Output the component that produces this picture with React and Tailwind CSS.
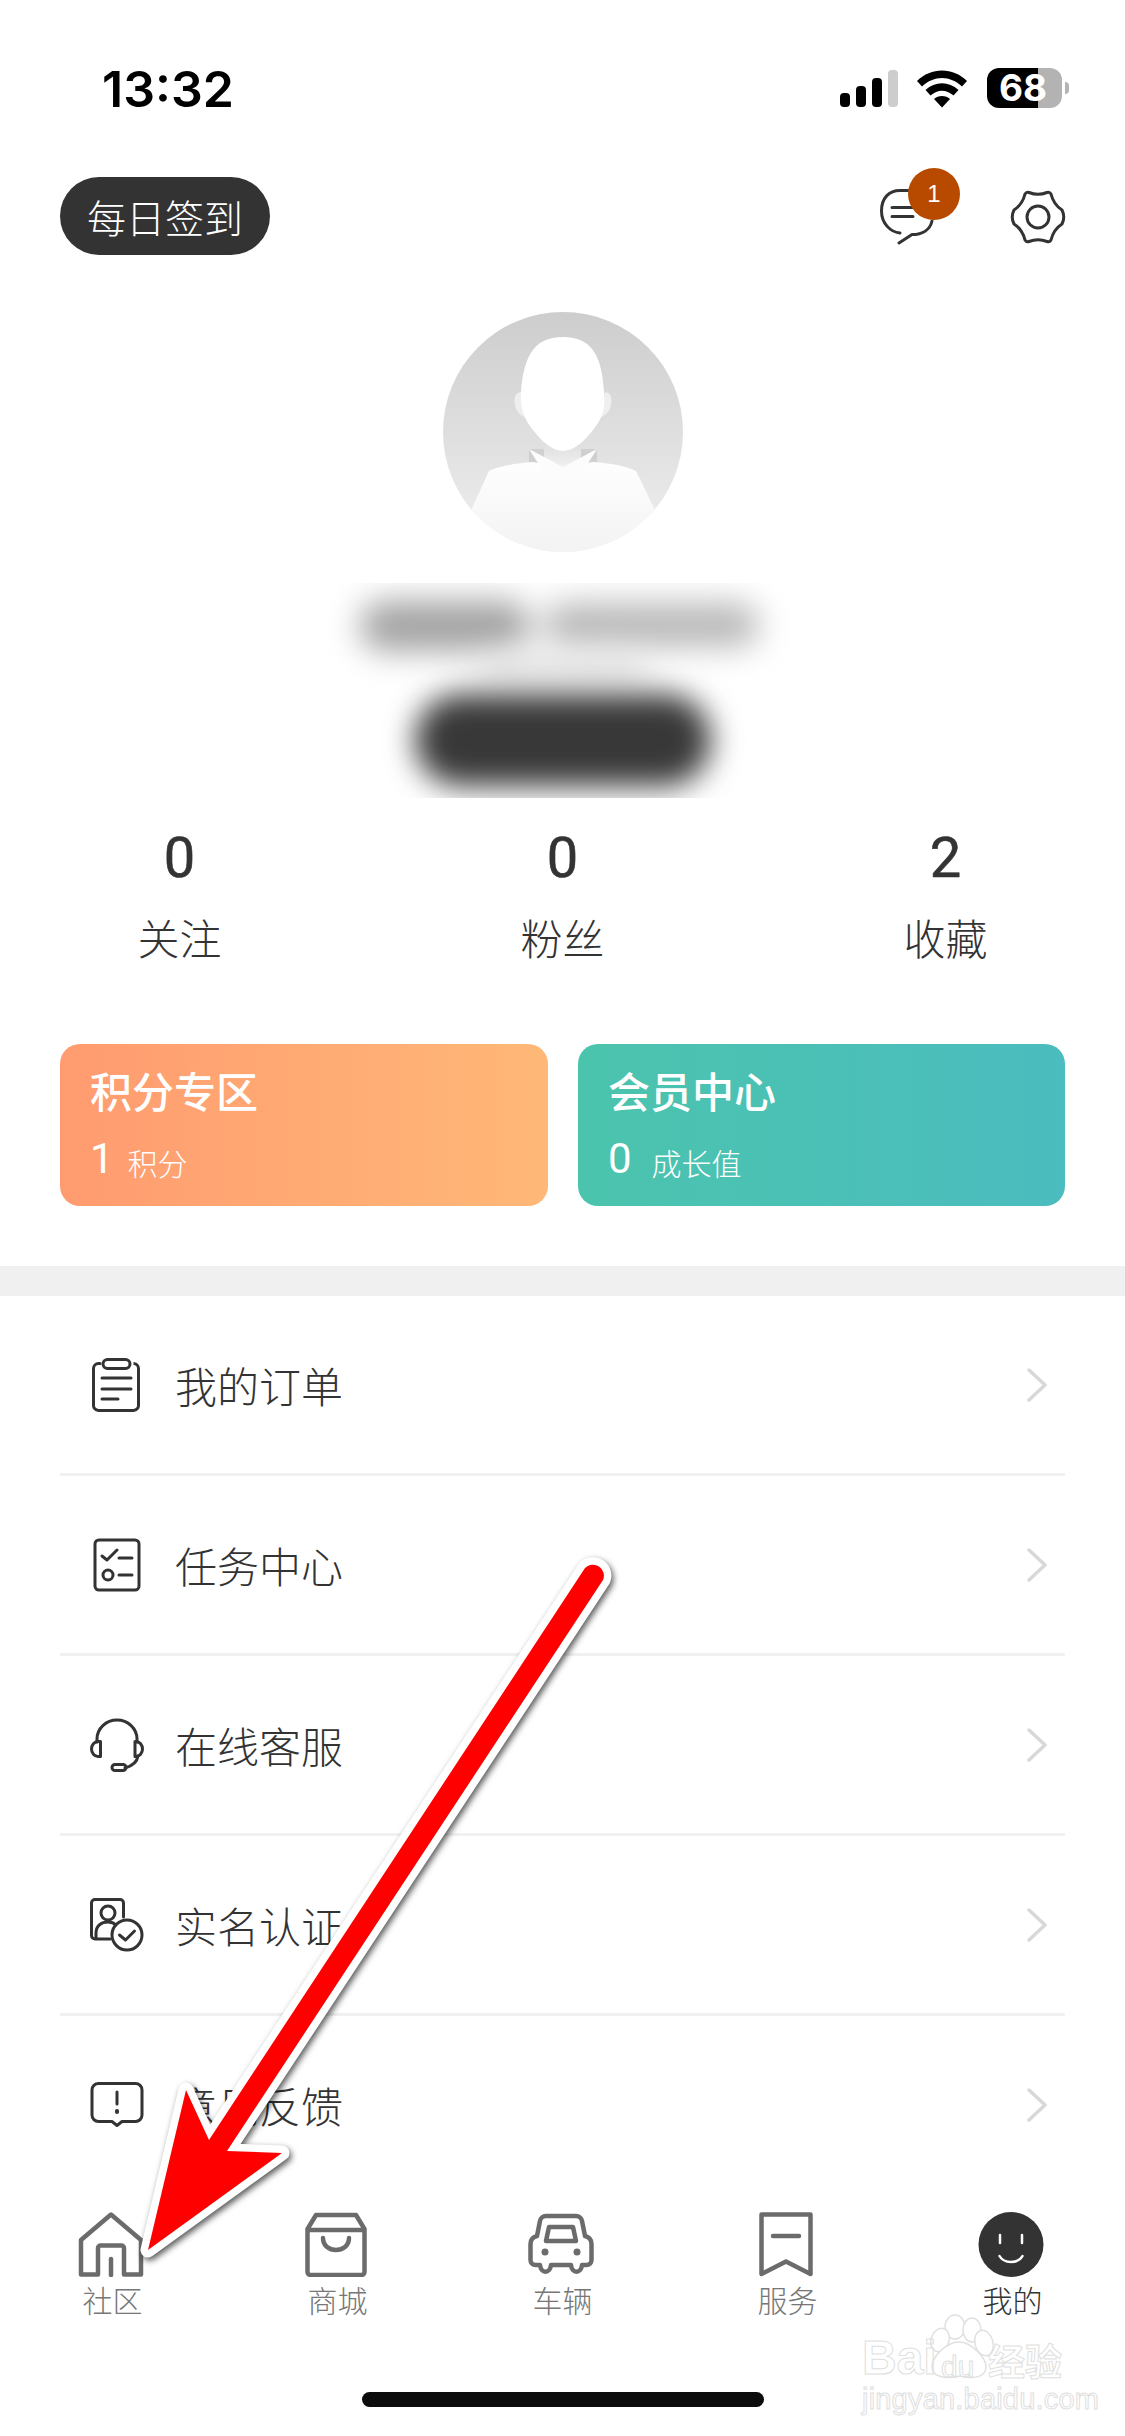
import React from "react";

const Clipboard = () => (
  <svg width="54" height="54" viewBox="0 0 54 54" fill="none" stroke="#333" strokeWidth="3" strokeLinecap="round">
    <path d="M10 5.500H8.500a5 5 0 0 0-5 5V47a5 5 0 0 0 5 5.500h35a5 5 0 0 0 5-5.500V10.500a5 5 0 0 0-5-5H44" />
    <rect x="13" y="1.500" width="27" height="9" rx="4.500" />
    <path d="M12 20H41M12 31H41M12 41H28" />
  </svg>
);
const Task = () => (
  <svg width="54" height="54" viewBox="0 0 54 54" fill="none" stroke="#333" strokeWidth="3" strokeLinecap="round" strokeLinejoin="round">
    <rect x="5" y="2" width="44" height="50" rx="4" />
    <path d="M12 18L17 22L27 12M29 20H42M29 37H42" />
    <circle cx="18" cy="37" r="5" />
  </svg>
);
const Headset = () => (
  <svg width="54" height="54" viewBox="0 0 54 54" fill="none" stroke="#333" strokeWidth="3" strokeLinecap="round" strokeLinejoin="round">
    <path d="M7 24V21a20 19 0 0 1 40 0V24" />
    <path d="M10.500 23.500H8a6.500 7.500 0 0 0 0 15H10.500Z" />
    <path d="M45 23.500H46a6.500 7.500 0 0 1 0 15H45Z" />
    <path d="M48 38C47 45 42 48 35 50" />
    <rect x="22" y="46.500" width="14" height="6" rx="3" />
  </svg>
);
const IdCheck = () => (
  <svg width="54" height="54" viewBox="0 0 54 54" fill="none" stroke="#333" strokeWidth="3" strokeLinecap="round" strokeLinejoin="round">
    <path d="M20 41H5a3.500 3.500 0 0 1-3.500-3.500V5A3.500 3.500 0 0 1 5 1.500H30A3.500 3.500 0 0 1 33.500 5V19" />
    <circle cx="18" cy="15" r="7" />
    <path d="M6 40V35C6 28 11 24 18 24C22 24 24 25 26 27" />
    <circle cx="37" cy="37" r="15" fill="#fff" />
    <path d="M29.500 37L35.500 42L44.500 33" />
  </svg>
);
const Feedback = () => (
  <svg width="54" height="54" viewBox="0 0 54 54" fill="none" stroke="#333" strokeWidth="3" strokeLinecap="round" strokeLinejoin="round">
    <path d="M8.500 5.500H45.500a6.500 6.500 0 0 1 6.500 6.500V37a6.500 6.500 0 0 1-6.500 6.500H32L27 47.500L22 43.500H8.500A6.500 6.500 0 0 1 2 37V12A6.500 6.500 0 0 1 8.500 5.500Z" />
    <path d="M27 14V26" />
    <path d="M27 33V34" strokeWidth="4" />
  </svg>
);
const Chevron = () => (
  <svg width="20" height="34" viewBox="0 0 20 34" fill="none" stroke="#d8d8d8" strokeWidth="3.500" strokeLinecap="round" strokeLinejoin="round">
    <path d="M2 2L18 17L2 32" />
  </svg>
);

const Home = () => (
  <svg width="66" height="65" viewBox="0 0 66 65" fill="none" stroke="#6b6b6b" strokeWidth="4.500" strokeLinejoin="round" strokeLinecap="round">
    <path d="M3 28L33 2.500L63 28V62.500H46V36a2.500 2.500 0 0 0-2.500-2.500H22.500A2.500 2.500 0 0 0 20 36V62.500H3Z" />
    <path d="M33 47V63" />
  </svg>
);
const Store = () => (
  <svg width="62" height="65" viewBox="0 0 62 65" fill="none" stroke="#6b6b6b" strokeWidth="4.500" strokeLinejoin="round" strokeLinecap="round">
    <path d="M11 3H51L59.500 17V60a3 3 0 0 1-3 3H5.500a3 3 0 0 1-3-3V17Z" />
    <path d="M3 18H59" />
    <path d="M18 26C18 42 44 42 44 26" />
  </svg>
);
const Car = () => (
  <svg width="66" height="65" viewBox="0 0 66 65" fill="none" stroke="#6b6b6b" strokeWidth="4.500" strokeLinejoin="round" strokeLinecap="round">
    <path d="M18 4H48a6 6 0 0 1 6 5L57 24C61 25 63.500 28 63.500 32V48a5 5 0 0 1-5 5H54C53 62 44 62 43 53H23C22 62 13 62 12 53H7.500a5 5 0 0 1-5-5V32C2.500 28 5 25 9 24L12 9a6 6 0 0 1 6-5Z" />
    <path d="M21 15H45L48 29H18Z" />
    <circle cx="17" cy="40" r="3.500" fill="#6b6b6b" stroke="none" />
    <circle cx="49" cy="40" r="3.500" fill="#6b6b6b" stroke="none" />
  </svg>
);
const Bookmark = () => (
  <svg width="56" height="65" viewBox="0 0 56 65" fill="none" stroke="#6b6b6b" strokeWidth="4.500" strokeLinejoin="round" strokeLinecap="round">
    <path d="M3.500 2.500H52.500V62L28 49.500L3.500 62Z" />
    <path d="M15 24H41" />
  </svg>
);
const Smile = () => (
  <svg width="66" height="65" viewBox="0 0 66 65" fill="none">
    <circle cx="33" cy="32.500" r="32.500" fill="#333" />
    <path d="M22 23V31M44 23V31" stroke="#fff" strokeWidth="2.500" strokeLinecap="round" />
    <path d="M21.500 44C26 52 40 52 44.500 44" stroke="#fff" strokeWidth="2.500" strokeLinecap="round" />
  </svg>
);

const rows = [
  { label: "我的订单", Icon: Clipboard },
  { label: "任务中心", Icon: Task },
  { label: "在线客服", Icon: Headset },
  { label: "实名认证", Icon: IdCheck },
  { label: "意见反馈", Icon: Feedback },
];
const tabs = [
  { label: "社区", Icon: Home },
  { label: "商城", Icon: Store },
  { label: "车辆", Icon: Car },
  { label: "服务", Icon: Bookmark },
  { label: "我的", Icon: Smile, active: true },
];
const stats = [
  { n: "0", label: "关注" },
  { n: "0", label: "粉丝" },
  { n: "2", label: "收藏" },
];

const Avatar = () => (
  <svg width="240" height="240" viewBox="442 312 240 240" className="block">
    <defs>
      <linearGradient id="avbg" x1="0" y1="0" x2="0" y2="1">
        <stop offset="0" stopColor="#cdcdcd" />
        <stop offset="1" stopColor="#f0f0f0" />
      </linearGradient>
      <linearGradient id="avbody" x1="0" y1="0" x2="0" y2="1">
        <stop offset="0" stopColor="#fefefe" />
        <stop offset="1" stopColor="#f2f2f2" />
      </linearGradient>
      <linearGradient id="avneck" x1="0" y1="0" x2="0" y2="1">
        <stop offset="0" stopColor="#dcdcdc" />
        <stop offset="1" stopColor="#fafafa" />
      </linearGradient>
      <clipPath id="avclip">
        <circle cx="562" cy="432" r="120" />
      </clipPath>
    </defs>
    <g clipPath="url(#avclip)">
      <rect x="442" y="312" width="240" height="240" fill="url(#avbg)" />
      <path d="M520 392C513 393 513 400 514 405C515 411 519 415 525 418Z" fill="#efefef" />
      <path d="M604 392C611 393 611 400 610 405C609 411 605 415 599 418Z" fill="#efefef" />
      <rect x="528" y="449" width="68" height="16" fill="#d0d0d0" />
      <rect x="543" y="440" width="37" height="40" fill="url(#avneck)" />
      <path d="M471 508L488 471C498 466 516 463 532 462L562 467L592 462C608 463 626 466 635 471L653 508V560H471Z" fill="url(#avbody)" />
      <path d="M528 449L562 467L552 487Z" fill="#fcfcfc" />
      <path d="M596 449L562 467L572 487Z" fill="#fcfcfc" />
      <path d="M562 337C536 337 523 352 520 392C519 410 524 420 532 430C541 442 552 451 562 451C572 451 583 442 592 430C600 420 605 410 603 392C601 352 588 337 562 337Z" fill="#fff" />
    </g>
  </svg>
);

export default function App() {
  return (
    <div className="relative w-[1125px] h-[2436px] overflow-hidden bg-white flex flex-col font-['Noto_Sans_CJK_SC','Noto_Sans',sans-serif] font-light text-[#333]">
      {/* status bar */}
      <div className="h-[177px] flex justify-between items-start pt-[69px] pl-[102px] pr-[56px] text-black">
        <div className="font-['Inter',sans-serif] font-semibold text-[50px] leading-[40px]">13:32</div>
        <div className="flex items-start mt-[-1px]">
          <div className="flex items-end gap-[6px] h-[37px] mt-[2px]">
            <div className="w-[10px] h-[14px] rounded-[4px] bg-black" />
            <div className="w-[10px] h-[21px] rounded-[4px] bg-black" />
            <div className="w-[10px] h-[29px] rounded-[4px] bg-black" />
            <div className="w-[10px] h-[37px] rounded-[4px] bg-[#cdcdcd]" />
          </div>
          <svg width="50" height="38" viewBox="0 0 50 38" className="ml-[19px] mt-[2px]">
            <path d="M0 11C14 -3 36 -3 50 11L45 16.500C33 5 17 5 5 16.500Z" fill="#000" />
            <path d="M8.500 20C18 11 32 11 41.500 20L36.500 25.500C29 19 21 19 13.500 25.500Z" fill="#000" />
            <path d="M17 29C21 25 29 25 33 29L25 37.500Z" fill="#000" />
          </svg>
          <div className="relative ml-[20px] w-[75px] h-[40px]">
            <div className="w-full h-full rounded-[12px] overflow-hidden flex">
              <div className="w-[51px] bg-black" />
              <div className="flex-1 bg-[#b3b3b3]" />
            </div>
            <div className="absolute left-[12px] top-0 h-[40px] flex items-center font-['Inter',sans-serif] font-bold text-[37px] leading-[40px] text-white">68</div>
          </div>
          <div className="ml-[3px] mt-[14px] w-[4px] h-[12px] rounded-r-[4px] bg-[#b3b3b3]" />
        </div>
      </div>

      {/* header */}
      <div className="h-[78px] flex justify-between items-center pl-[60px] pr-[59px]">
        <div className="w-[210px] h-[78px] rounded-full bg-[#333] text-white text-[39px] flex items-center justify-center">每日签到</div>
        <div className="flex items-center gap-[76px] mt-[1px]">
          <div className="relative w-[54px] h-[56px]">
            <svg width="54" height="56" viewBox="0 0 54 56" fill="none" stroke="#333" strokeWidth="3" strokeLinecap="round" strokeLinejoin="round">
              <path d="M28 1.500H20C9 1.500 1.500 9 1.500 22C1.500 34 10 43 20 44" />
              <path d="M19 54L32 45.500C42 45.500 50 41 52 32" />
              <path d="M12 18.500H33M12 27.500H33" />
            </svg>
            <div className="absolute top-[-21px] left-[28px] w-[52px] h-[52px] rounded-full bg-[#b84a00] text-white text-[24px] flex items-center justify-center font-['Liberation_Sans',sans-serif]">1</div>
          </div>
          <svg width="56" height="54" viewBox="-28 -27 56 54" fill="none" stroke="#333" strokeWidth="3" strokeLinecap="round" strokeLinejoin="round">
            <path d="M-9 -24.500Q0 -21 9 -24.500Q11.500 -25.500 13 -23Q15.500 -12.500 24 -7Q27.500 0 24 7Q15.500 12.500 13 23Q11.500 25.500 9 24.500Q0 21 -9 24.500Q-11.500 25.500 -13 23Q-15.500 12.500 -24 7Q-27.500 0 -24 -7Q-15.500 -12.500 -13 -23Q-11.500 -25.500 -9 -24.500Z" />
            <circle r="11" />
          </svg>
        </div>
      </div>

      {/* avatar */}
      <div className="mt-[57px] flex justify-center">
        <Avatar />
      </div>

      {/* blurred name block */}
      <div className="mt-[31px] h-[215px] w-[560px] mx-auto overflow-hidden flex flex-col items-center">
        <div className="mt-[18px] flex gap-[14px] pr-[6px] blur-[16px]">
          <div className="w-[170px] h-[50px] rounded-full bg-[#a2a2a2]" />
          <div className="w-[215px] h-[44px] mt-[2px] rounded-full bg-[#b8b8b8]" />
        </div>
        <div className="mt-[2px] w-[170px] h-[26px] rounded-full bg-[#dedede] blur-[16px]" />
        <div className="mt-[15px] w-[296px] h-[92px] rounded-full bg-[#383838] blur-[15px]" />
      </div>

      {/* stats */}
      <div className="mt-[30px] mx-[-12px] grid grid-cols-[repeat(3,383px)]">
        {stats.map((s) => (
          <div key={s.label} className="flex flex-col items-center">
            <div className="h-[60px] flex items-center font-['Roboto',sans-serif] font-normal [-webkit-text-stroke:0.6px_#333] text-[56px] leading-[60px]">{s.n}</div>
            <div className="mt-[23px] h-[52px] flex items-center text-[42px] leading-[52px]">{s.label}</div>
          </div>
        ))}
      </div>

      {/* cards */}
      <div className="mt-[81px] px-[60px] flex gap-[30px]">
        <div className="w-[488px] h-[162px] rounded-[20px] bg-gradient-to-r from-[#ff9b70] to-[#ffb877] text-white pl-[30px] pt-[22px]">
          <div className="text-[42px] leading-[48px] font-medium">积分专区</div>
          <div className="mt-[25px] flex items-center h-[40px]">
            <span className="font-['Roboto',sans-serif] font-normal text-[42px] leading-[40px]">1</span>
            <span className="ml-[14px] text-[30px] leading-[40px] mt-[6px]">积分</span>
          </div>
        </div>
        <div className="w-[487px] h-[162px] rounded-[20px] bg-gradient-to-r from-[#4bc4ad] to-[#4bbcbf] text-white pl-[30px] pt-[22px]">
          <div className="text-[42px] leading-[48px] font-medium">会员中心</div>
          <div className="mt-[25px] flex items-center h-[40px]">
            <span className="font-['Roboto',sans-serif] font-normal text-[42px] leading-[40px]">0</span>
            <span className="ml-[20px] text-[30px] leading-[40px] mt-[6px]">成长值</span>
          </div>
        </div>
      </div>

      {/* band */}
      <div className="mt-[60px] h-[30px] bg-[#f0f0f0]" />

      {/* list */}
      <div className="mx-[60px] flex flex-col">
        {rows.map((r, i) => (
          <div
            key={r.label}
            className={
              i < rows.length - 1
                ? "h-[180px] border-b-[3px] border-[#f1f1f1] flex items-center pl-[30px] pr-[18px]"
                : "h-[177px] flex items-center pl-[30px] pr-[18px]"
            }
          >
            <r.Icon />
            <span className="ml-[31px] text-[42px] leading-[54px] flex-1">{r.label}</span>
            <Chevron />
          </div>
        ))}
      </div>

      {/* tab bar */}
      <div className="mt-[19px] grid grid-cols-5">
        {tabs.map((t) => (
          <div key={t.label} className="flex flex-col items-center">
            <div className="h-[65px] pr-[3px] flex items-center justify-center"><t.Icon /></div>
            <span className={t.active ? "mt-[4px] text-[30px] leading-[36px] text-[#333]" : "mt-[4px] text-[30px] leading-[36px] text-[#777]"}>{t.label}</span>
          </div>
        ))}
      </div>

      {/* home indicator */}
      <div className="mt-[75px] mx-auto w-[402px] h-[15px] rounded-full bg-[#0c0c0c]" />

      {/* watermark */}
      <div className="absolute left-[860px] top-[2312px] w-[210px] h-[100px] text-transparent font-['Liberation_Sans',sans-serif] font-bold [-webkit-text-stroke:1px_#e0e0e0]">
        <svg width="210" height="70" viewBox="0 0 210 70" className="absolute left-0 top-0" fill="#fff" stroke="#e0e0e0" strokeWidth="1.500">
          <ellipse cx="95" cy="15" rx="10" ry="12" />
          <ellipse cx="112" cy="18" rx="9" ry="12" />
          <ellipse cx="80" cy="28" rx="9" ry="12" transform="rotate(20 80 28)" />
          <ellipse cx="124" cy="31" rx="9" ry="13" transform="rotate(-15 124 31)" />
          <path d="M99 30C111 30 127 46 126 56C125 66 112 67 100 64C88 67 72 66 72 55C72 45 86 30 99 30Z" />
        </svg>
        <span className="absolute left-[2px] top-[24px] text-[48px] leading-[44px]">Bai</span>
        <span className="absolute left-[81px] top-[40px] text-[30px] leading-[30px] font-normal">du</span>
        <span className="absolute left-[128px] top-[26px] text-[37px] leading-[44px] font-['Noto_Sans_CJK_SC',sans-serif]">经验</span>
        <span className="absolute left-[2px] top-[73px] text-[29px] leading-[28px] font-normal tracking-[0.2px]">jingyan.baidu.com</span>
      </div>

      {/* annotation arrow */}
      <svg
        className="absolute left-0 top-0 w-[1125px] h-[2436px] pointer-events-none drop-shadow-[2px_3px_3px_rgba(0,0,0,0.65)]"
        viewBox="0 0 1125 2436"
      >
        <path
          d="M148 2250L186 2090L209 2140L585 1568A11 11 0 0 1 603 1580L227 2151L282 2153Z"
          fill="#ff0000"
          stroke="#fff"
          strokeWidth="15"
          strokeLinejoin="round"
          paintOrder="stroke"
        />
      </svg>
    </div>
  );
}
